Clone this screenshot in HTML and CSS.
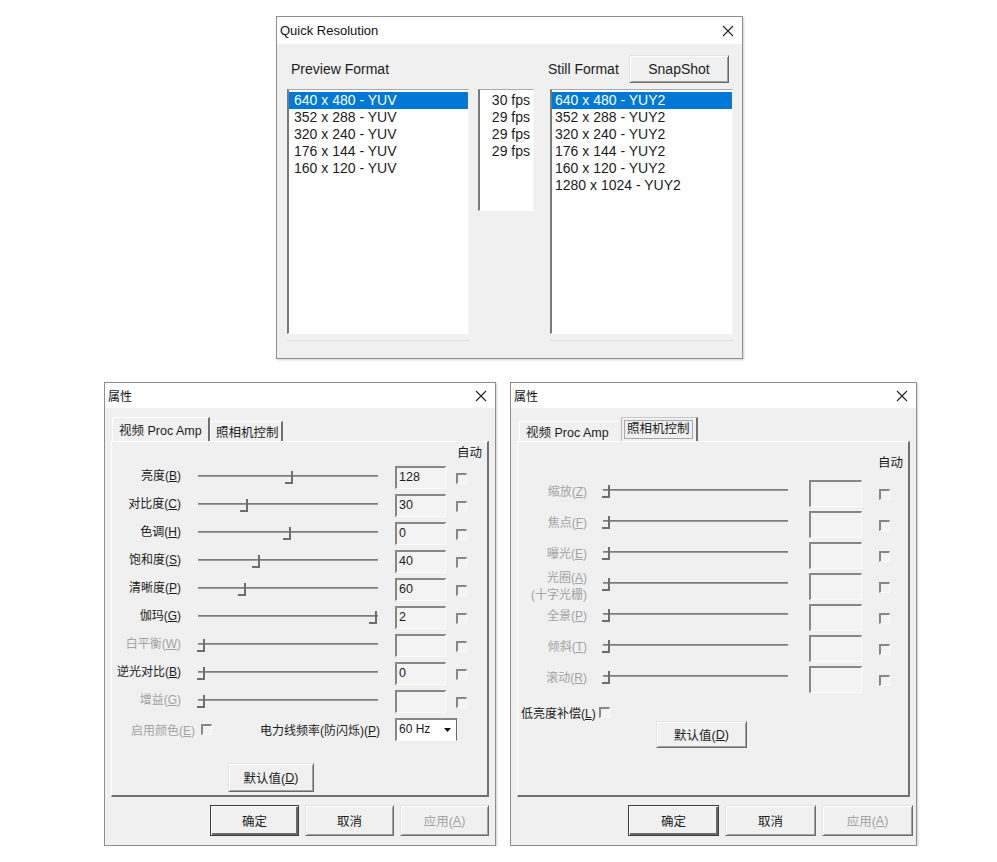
FILE: index.html
```html
<!DOCTYPE html>
<html lang="zh">
<head>
<meta charset="utf-8">
<title>Dialogs</title>
<link rel="stylesheet" href="styles.css">
</head>
<body>
<div class="desk">
  <div class="dlg qr">
    <div class="titlebar"><span class="title">Quick Resolution</span>
      <svg class="close" viewBox="0 0 12 12"><path d="M1 1L11 11M11 1L1 11"/></svg></div>
    <div class="qr-body">
      <div class="qr-head">
        <span class="pf-lbl">Preview Format</span>
        <span class="sf-lbl">Still Format</span>
        <div class="btn snap">SnapShot</div>
      </div>
      <div class="qr-lists">
        <div class="col prev">
          <div class="lb">
            <div class="it sel">640 x 480 - YUV</div>
            <div class="it">352 x 288 - YUV</div>
            <div class="it">320 x 240 - YUV</div>
            <div class="it">176 x 144 - YUV</div>
            <div class="it">160 x 120 - YUV</div>
          </div>
          <div class="foot"></div>
        </div>
        <div class="col fps">
          <div class="lb">
            <div class="it">30 fps</div>
            <div class="it">29 fps</div>
            <div class="it">29 fps</div>
            <div class="it">29 fps</div>
          </div>
        </div>
        <div class="col still">
          <div class="lb">
            <div class="it sel">640 x 480 - YUY2</div>
            <div class="it">352 x 288 - YUY2</div>
            <div class="it">320 x 240 - YUY2</div>
            <div class="it">176 x 144 - YUY2</div>
            <div class="it">160 x 120 - YUY2</div>
            <div class="it">1280 x 1024 - YUY2</div>
          </div>
          <div class="foot"></div>
        </div>
      </div>
    </div>
  </div>

  <div class="bottom">
    <!-- Left property dialog -->
    <div class="dlg prop pl">
      <div class="titlebar"><span class="title cjk">属性</span>
        <svg class="close" viewBox="0 0 12 12"><path d="M1 1L11 11M11 1L1 11"/></svg></div>
      <div class="prop-body">
        <div class="tabs">
          <div class="tab active t1">视频 Proc Amp</div>
          <div class="tab t2">照相机控制</div>
        </div>
        <div class="panel">
          <div class="auto-h">自动</div>
          <div class="row"><span class="lbl">亮度(<u>B</u>)</span><div class="slider"><div class="track"></div><span class="thumb" style="left:87px"></span></div><div class="box">128</div><span class="chk"></span></div>
          <div class="row"><span class="lbl">对比度(<u>C</u>)</span><div class="slider"><div class="track"></div><span class="thumb" style="left:42px"></span></div><div class="box">30</div><span class="chk"></span></div>
          <div class="row"><span class="lbl">色调(<u>H</u>)</span><div class="slider"><div class="track"></div><span class="thumb" style="left:85px"></span></div><div class="box">0</div><span class="chk"></span></div>
          <div class="row"><span class="lbl">饱和度(<u>S</u>)</span><div class="slider"><div class="track"></div><span class="thumb" style="left:54px"></span></div><div class="box">40</div><span class="chk"></span></div>
          <div class="row"><span class="lbl">清晰度(<u>P</u>)</span><div class="slider"><div class="track"></div><span class="thumb" style="left:40px"></span></div><div class="box">60</div><span class="chk"></span></div>
          <div class="row"><span class="lbl">伽玛(<u>G</u>)</span><div class="slider"><div class="track"></div><span class="thumb" style="left:171px"></span></div><div class="box">2</div><span class="chk"></span></div>
          <div class="row dis"><span class="lbl">白平衡(<u>W</u>)</span><div class="slider"><div class="track"></div><span class="thumb" style="left:-1px"></span></div><div class="box"></div><span class="chk"></span></div>
          <div class="row"><span class="lbl">逆光对比(<u>B</u>)</span><div class="slider"><div class="track"></div><span class="thumb" style="left:-1px"></span></div><div class="box">0</div><span class="chk"></span></div>
          <div class="row dis"><span class="lbl">增益(<u>G</u>)</span><div class="slider"><div class="track"></div><span class="thumb" style="left:-1px"></span></div><div class="box"></div><span class="chk"></span></div>
          <div class="extra">
            <span class="en dis">启用颜色(<u>E</u>)</span><span class="chk"></span>
            <span class="plf">电力线频率(防闪烁)(<u>P</u>)</span>
            <div class="combo"><span class="cv">60 Hz</span><span class="arr"><svg viewBox="0 0 7 4"><path d="M0 0H7L3.5 4Z"/></svg></span></div>
          </div>
          <div class="btn def-l">默认值(<u>D</u>)</div>
        </div>
        <div class="btnrow">
          <div class="btn ok w89">确定</div>
          <div class="btn w89">取消</div>
          <div class="btn w89 disb">应用(<u>A</u>)</div>
        </div>
      </div>
    </div>

    <!-- Right property dialog -->
    <div class="dlg prop pr">
      <div class="titlebar"><span class="title cjk">属性</span>
        <svg class="close" viewBox="0 0 12 12"><path d="M1 1L11 11M11 1L1 11"/></svg></div>
      <div class="prop-body">
        <div class="tabs r">
          <div class="tab t1b">视频 Proc Amp</div>
          <div class="tab active t2b"><span class="focus">照相机控制</span></div>
        </div>
        <div class="panel">
          <div class="auto-h r">自动</div>
          <div class="row r dis"><span class="lbl">缩放(<u>Z</u>)</span><div class="slider"><div class="track"></div><span class="thumb" style="left:-1px"></span></div><div class="box"></div><span class="chk"></span></div>
          <div class="row r dis"><span class="lbl">焦点(<u>F</u>)</span><div class="slider"><div class="track"></div><span class="thumb" style="left:-1px"></span></div><div class="box"></div><span class="chk"></span></div>
          <div class="row r dis"><span class="lbl">曝光(<u>E</u>)</span><div class="slider"><div class="track"></div><span class="thumb" style="left:-1px"></span></div><div class="box"></div><span class="chk"></span></div>
          <div class="row r dis"><span class="lbl two">光圈(<u>A</u>)<br>(十字光栅)</span><div class="slider"><div class="track"></div><span class="thumb" style="left:-1px"></span></div><div class="box"></div><span class="chk"></span></div>
          <div class="row r dis"><span class="lbl">全景(<u>P</u>)</span><div class="slider"><div class="track"></div><span class="thumb" style="left:-1px"></span></div><div class="box"></div><span class="chk"></span></div>
          <div class="row r dis"><span class="lbl">倾斜(<u>T</u>)</span><div class="slider"><div class="track"></div><span class="thumb" style="left:-1px"></span></div><div class="box"></div><span class="chk"></span></div>
          <div class="row r dis"><span class="lbl">滚动(<u>R</u>)</span><div class="slider"><div class="track"></div><span class="thumb" style="left:-1px"></span></div><div class="box"></div><span class="chk"></span></div>
          <div class="lowlight"><span>低亮度补偿(<u>L</u>)</span><span class="chk"></span></div>
          <div class="btn def-r">默认值(<u>D</u>)</div>
        </div>
        <div class="btnrow">
          <div class="btn ok w91">确定</div>
          <div class="btn w91">取消</div>
          <div class="btn w91 disb">应用(<u>A</u>)</div>
        </div>
      </div>
    </div>
  </div>
</div>
</body>
</html>
```

FILE: styles.css
```css
* { box-sizing: border-box; }
html, body { margin: 0; background: #fff; }
body {
  font-family: "Liberation Sans", "Noto Sans CJK SC", sans-serif;
  color: #1c1c1c;
}
u { text-decoration: underline; text-underline-offset: 1px; }

.desk { padding-top: 16px; }

/* generic dialog window */
.dlg {
  background: #f0f0f0;
  border: 1px solid #8e8e8e;
  box-shadow: 1px 1px 2px rgba(0,0,0,0.18);
  display: flex;
  flex-direction: column;
}
.titlebar {
  background: #fff;
  display: flex;
  align-items: center;
  justify-content: space-between;
  padding: 0 8px 0 3px;
  flex: none;
}
.title { font-size: 13px; color: #111; }
.title.cjk { font-size: 12px; }
.close { width: 12px; height: 12px; }
.close path { stroke: #222; stroke-width: 1.1; fill: none; }

/* buttons */
.btn {
  display: flex;
  align-items: center;
  justify-content: center;
  background: #f0f0f0;
  border-style: solid;
  border-width: 1px;
  border-color: #e2e2e2 #6a6a6a #6a6a6a #e2e2e2;
  box-shadow: inset 1px 1px #fff, inset -1px -1px #a2a2a2;
  font-size: 12.5px;
  color: #1c1c1c;
}
.btn.ok {
  border-color: #3c3c3c;
  box-shadow: inset 1px 1px #fff, inset -2px -2px #6a6a6a;
}
.btn.disb { color: #a3a3a3; }
.w89 { width: 89px; height: 31px; }
.w91 { width: 91px; height: 31px; }

/* ---------- Quick Resolution ---------- */
.qr { margin-left: 276px; width: 467px; height: 343px; }
.qr .titlebar { height: 27px; }
.qr-body { padding: 11px 0 0 10px; }
.qr-head { display: flex; align-items: center; height: 28px; font-size: 14px; }
.pf-lbl { width: 261px; padding-left: 4px; }
.sf-lbl { width: 81px; }
.btn.snap { width: 100px; height: 28px; font-size: 14px; }
.qr-lists { display: flex; align-items: flex-start; margin-top: 6px; }
.col.prev { width: 182px; }
.col.fps { width: 56px; margin-left: 9px; }
.col.still { width: 183px; margin-left: 16px; }
.lb {
  background: #fff;
  border-style: solid;
  border-width: 1px 1px 1px 2px;
  border-color: #a8a8a8 #f5f5f5 #fff #7a7a7a;
  height: 245px;
  padding-top: 2px;
  font-size: 14px;
  line-height: 17px;
}
.fps .lb { height: 122px; text-align: right; }
.it { white-space: nowrap; padding-left: 5px; }
.fps .it { padding: 0 3px 0 0; }
.still .it { padding-left: 3px; }
.it.sel { background: #0078d7; color: #fff; }
.foot { height: 1px; background: #dedede; margin-top: 6px; }

/* ---------- Property dialogs ---------- */
.bottom { display: flex; gap: 14px; padding-left: 104px; margin-top: 23px; }
.prop { height: 464px; }
.pl { width: 392px; }
.pr { width: 407px; }
.prop .titlebar { height: 25px; }
.prop-body { padding: 9px 6px 0 6px; display: flex; flex-direction: column; }

.tabs { display: flex; align-items: flex-end; height: 24px; padding-left: 1px; }
.tabs.r { padding-left: 2px; }
.tab {
  display: flex;
  align-items: center;
  height: 20px;
  padding: 0 5px;
  font-size: 12.5px;
  white-space: nowrap;
  border-style: solid;
  border-width: 1px 2px 0 1px;
  border-color: #fff #707070 transparent #fff;
}
.tab.active { height: 24px; }
.t1 { width: 98px; padding-left: 6px; }
.t2 { width: 73px; }
.t1b { width: 100px; padding-left: 6px; border-right-color: transparent; }
.t2b { width: 77px; margin-left: 2px; border-left-color: #b8b8b8; border-top-color: #c8c8c8; padding: 0 2px; }
.focus { border: 1px solid #a8a8a8; padding: 1px 2px; line-height: 15px; }

.panel {
  height: 356px;
  border-style: solid;
  border-width: 1px 2px 2px 1px;
  border-color: #fff #707070 #707070 #fff;
  display: flex;
  flex-direction: column;
  font-size: 12px;
}
.auto-h { height: 24px; text-align: right; padding: 2px 5px 0 0; line-height: 18px; font-size: 12.5px; }
.auto-h.r { height: 38px; padding-top: 12px; }

.row { display: flex; align-items: flex-start; height: 28px; flex: none; }
.row.r { height: 31px; }
.lbl { width: 69px; text-align: right; line-height: 18px; margin-top: 1px; white-space: nowrap; }
.row.r .lbl { line-height: 17px; margin-top: 4px; }
.row.r .lbl.two { margin-top: -3px; }
.dis, .dis .lbl { color: #a3a3a3; }

.slider { position: relative; width: 180px; height: 20px; margin-left: 17px; flex: none; }
.row.r .slider { width: 185px; margin-left: 16px; }
.track {
  margin-top: 9px;
  height: 2px;
  border-top: 1px solid #7c7c7c;
  border-bottom: 1px solid #9c9c9c;
}
.thumb {
  position: absolute;
  top: 5px;
  width: 8px;
  height: 13px;
  border-right: 2px solid #6e6e6e;
  border-bottom: 2px solid #6e6e6e;
}

.box {
  width: 51px;
  height: 23px;
  margin-left: 17px;
  flex: none;
  background: #f3f3f3;
  border-style: solid;
  border-width: 2px 1px 1px 2px;
  border-color: #878787 #fbfbfb #fbfbfb #878787;
  font-size: 12.5px;
  line-height: 19px;
  padding-left: 2px;
  color: #1c1c1c;
}
.row.r .box { width: 53px; height: 27px; margin-left: 21px; }

.chk {
  width: 11px;
  height: 11px;
  flex: none;
  background: #f3f3f3;
  border-style: solid;
  border-width: 2px 1px 1px 2px;
  border-color: #878787 #fbfbfb #fbfbfb #878787;
}
.row .chk { margin-left: 10px; margin-top: 7px; }
.row.r .chk { margin-left: 17px; margin-top: 9px; }

/* left panel extra rows */
.extra { display: flex; align-items: center; height: 23px; flex: none; }
.en { width: 83px; text-align: right; }
.extra .chk { margin-left: 6px; }
.plf { width: 168px; text-align: right; }
.combo {
  display: flex;
  width: 62px;
  height: 23px;
  margin-left: 15px;
  background: #fff;
  border-style: solid;
  border-width: 2px 1px 1px 2px;
  border-color: #878787 #6a6a6a #fbfbfb #878787;
}
.cv { flex: 1; font-size: 12px; line-height: 19px; padding-left: 2px; }
.arr { width: 17px; display: flex; align-items: center; justify-content: center; }
.arr svg { width: 7px; height: 4px; }
.arr path { fill: #111; }
.btn.def-l { width: 86px; height: 29px; margin: 22px 0 0 116px; }

/* right panel extra rows */
.lowlight { display: flex; align-items: center; height: 17px; margin-top: 7px; padding-left: 3px; flex: none; }
.lowlight .chk { margin-left: 3px; }
.btn.def-r { width: 91px; height: 27px; margin-left: 138px; }

.btnrow { display: flex; justify-content: flex-end; gap: 6px; margin-top: 8px; }
.pr .btnrow { margin-right: -3px; }
```
